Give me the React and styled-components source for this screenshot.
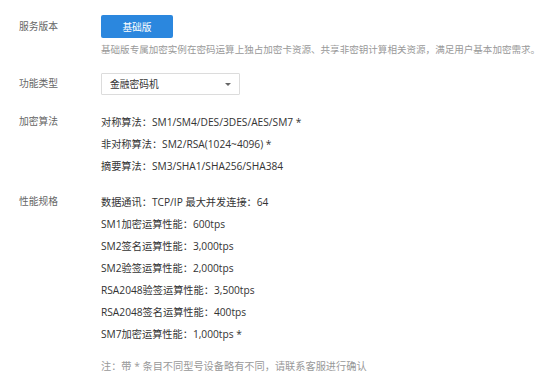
import React from 'react'
import styled, { createGlobalStyle } from 'styled-components'

const GlobalStyle = createGlobalStyle`
  html, body {
    margin: 0;
    padding: 0;
    background: #fff;
  }
  body {
    font-family: "Open Sans", "Noto Sans CJK SC", sans-serif;
    font-size: 9.75px;
    color: #333;
  }
`

const Page = styled.div`
  width: 546px;
  height: 385px;
  padding: 15px 0 0 19px;
  box-sizing: border-box;
  display: flex;
  flex-direction: column;
`

const Row = styled.div`
  display: flex;
  margin-bottom: ${({ $gap }) => $gap || 0}px;
`

const Label = styled.div`
  width: 82px;
  flex-shrink: 0;
  color: #666;
  line-height: ${({ $lh }) => $lh || 22}px;
`

const Content = styled.div`
  display: flex;
  flex-direction: column;
`

const Button = styled.div`
  width: 72px;
  height: 23px;
  background: #2b87de;
  border-radius: 2px;
  color: #fff;
  display: flex;
  align-items: center;
  justify-content: center;
`

const Hint = styled.div`
  font-size: 9.55px;
  color: #999;
  line-height: 22px;
  margin-top: 1px;
  white-space: nowrap;
`

const Select = styled.div`
  width: 121px;
  height: 20px;
  border: 1px solid #dcdcdc;
  border-radius: 1px;
  display: flex;
  align-items: center;
  justify-content: space-between;
  padding: 0 8px 0 8px;
  color: #333;
`

const Caret = styled.span`
  width: 0;
  height: 0;
  border-left: 3.5px solid transparent;
  border-right: 3.5px solid transparent;
  border-top: 3.5px solid #666;
`

const Line = styled.div`
  font-size: 10.2px;
  line-height: 22px;
  white-space: nowrap;
  color: ${({ $muted }) => ($muted ? '#999' : '#333')};
  margin-top: ${({ $muted }) => ($muted ? 10 : 0)}px;
`

const algorithms = [
  '对称算法：SM1/SM4/DES/3DES/AES/SM7 *',
  '非对称算法：SM2/RSA(1024~4096) *',
  '摘要算法：SM3/SHA1/SHA256/SHA384',
]

const specs = [
  '数据通讯：TCP/IP 最大并发连接：64',
  'SM1加密运算性能：600tps',
  'SM2签名运算性能：3,000tps',
  'SM2验签运算性能：2,000tps',
  'RSA2048验签运算性能：3,500tps',
  'RSA2048签名运算性能：400tps',
  'SM7加密运算性能：1,000tps *',
]

const App = () => {
  return (
    <>
      <GlobalStyle />
      <Page>
        <Row $gap={12}>
          <Label $lh={23}>服务版本</Label>
          <Content>
            <Button>基础版</Button>
            <Hint>基础版专属加密实例在密码运算上独占加密卡资源、共享非密钥计算相关资源，满足用户基本加密需求。</Hint>
          </Content>
        </Row>

        <Row $gap={16}>
          <Label>功能类型</Label>
          <Select>
            <span>金融密码机</span>
            <Caret />
          </Select>
        </Row>

        <Row $gap={14}>
          <Label>加密算法</Label>
          <Content>
            {algorithms.map((a, i) => (
              <Line key={i}>{a}</Line>
            ))}
          </Content>
        </Row>

        <Row>
          <Label>性能规格</Label>
          <Content>
            {specs.map((s, i) => (
              <Line key={i}>{s}</Line>
            ))}
            <Line $muted>注：带 * 条目不同型号设备略有不同，请联系客服进行确认</Line>
          </Content>
        </Row>
      </Page>
    </>
  )
}

export default App
